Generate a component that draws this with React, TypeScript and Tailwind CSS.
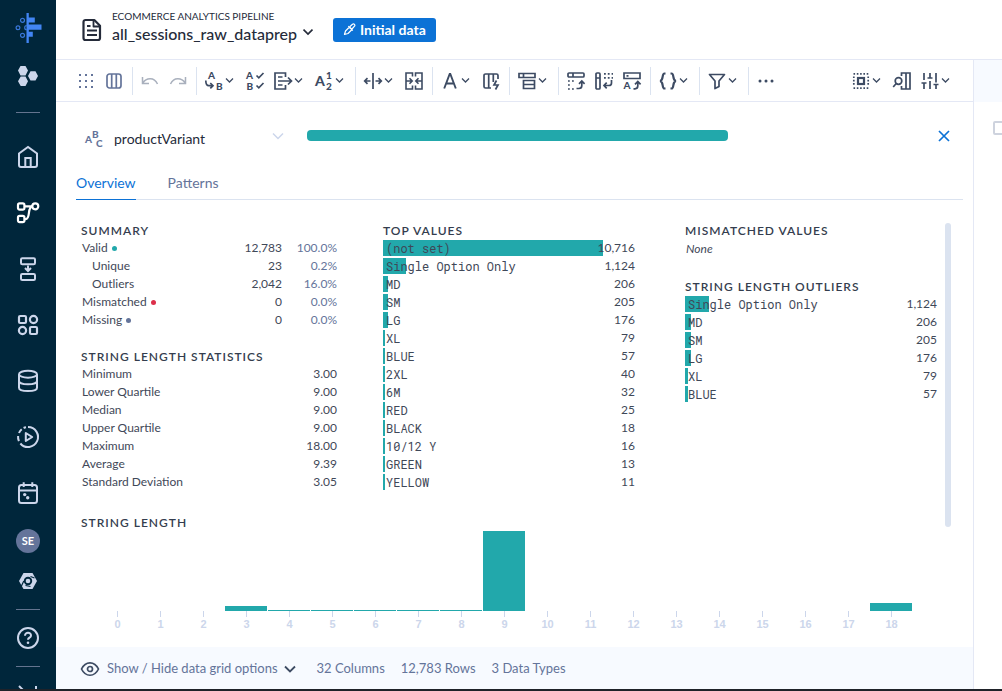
import type { ReactNode } from "react";

type Count = { label: string; count: string; bar: number };

const topValues: Count[] = [
  { label: "(not set)", count: "10,716", bar: 220 },
  { label: "Single Option Only", count: "1,124", bar: 23 },
  { label: "MD", count: "206", bar: 5 },
  { label: "SM", count: "205", bar: 5 },
  { label: "LG", count: "176", bar: 5 },
  { label: "XL", count: "79", bar: 2 },
  { label: "BLUE", count: "57", bar: 2 },
  { label: "2XL", count: "40", bar: 2 },
  { label: "6M", count: "32", bar: 2 },
  { label: "RED", count: "25", bar: 2 },
  { label: "BLACK", count: "18", bar: 2 },
  { label: "10/12 Y", count: "16", bar: 2 },
  { label: "GREEN", count: "13", bar: 2 },
  { label: "YELLOW", count: "11", bar: 2 },
];

const outliers: Count[] = [
  { label: "Single Option Only", count: "1,124", bar: 24 },
  { label: "MD", count: "206", bar: 6 },
  { label: "SM", count: "205", bar: 6 },
  { label: "LG", count: "176", bar: 6 },
  { label: "XL", count: "79", bar: 3 },
  { label: "BLUE", count: "57", bar: 3 },
];

const summary = [
  { label: "Valid", dot: "bg-[#22a8ab]", count: "12,783", pct: "100.0%", sub: false },
  { label: "Unique", dot: "", count: "23", pct: "0.2%", sub: true },
  { label: "Outliers", dot: "", count: "2,042", pct: "16.0%", sub: true },
  { label: "Mismatched", dot: "bg-[#dc2f4a]", count: "0", pct: "0.0%", sub: false },
  { label: "Missing", dot: "bg-[#64749a]", count: "0", pct: "0.0%", sub: false },
];

const statistics = [
  ["Minimum", "3.00"],
  ["Lower Quartile", "9.00"],
  ["Median", "9.00"],
  ["Upper Quartile", "9.00"],
  ["Maximum", "18.00"],
  ["Average", "9.39"],
  ["Standard Deviation", "3.05"],
];

const histogram = [0, 0, 0, 5, 1, 1, 1, 1, 1, 80, 0, 0, 0, 0, 0, 0, 0, 0, 8];

function Icon({ children, size = 20, sw = 1.7 }: { children: ReactNode; size?: number; sw?: number }) {
  return (
    <svg width={size} height={size} viewBox={`0 0 ${size} ${size}`} fill="none" stroke="currentColor" strokeWidth={sw} className="shrink-0 overflow-visible" aria-hidden="true">
      {children}
    </svg>
  );
}

function Letter({ x, y, size = 10, children }: { x: number; y: number; size?: number; children: string }) {
  return (
    <text x={x} y={y} fontSize={size} className="font-['Lato',sans-serif] font-black" fill="currentColor" stroke="none">
      {children}
    </text>
  );
}

function Chevron() {
  return (
    <svg width="9" height="9" viewBox="0 0 9 9" fill="none" stroke="currentColor" strokeWidth="1.3" className="shrink-0" aria-hidden="true">
      <path d="M1 2.500l3.500 3.500L8 2.500" />
    </svg>
  );
}

function Tool({ label, children, menu, tone = "text-[#3d4b63]" }: { label: string; children: ReactNode; menu?: boolean; tone?: string }) {
  return (
    <button type="button" aria-label={label} className={`flex h-7 shrink-0 items-center ${menu ? "w-[41px] gap-px" : "w-7"} pl-1 ${tone}`}>
      <Icon>{children}</Icon>
      {menu && <Chevron />}
    </button>
  );
}

function Divider() {
  return <span className="ml-1 mr-[3px] h-7 w-px shrink-0 bg-[#dbe3f0]" />;
}

function NavItem({ label, children, h = "h-14", tone = "text-[#ccd6eb]" }: { label: string; children: ReactNode; h?: string; tone?: string }) {
  return (
    <a href="#" aria-label={label} className={`flex w-full shrink-0 items-center justify-center ${h} ${tone}`}>
      {children}
    </a>
  );
}

function Sidebar() {
  return (
    <nav className="flex w-14 shrink-0 flex-col items-center overflow-hidden bg-[#00263b]">
      <NavItem label="Dashboard" tone="text-[#4285f4]">
        <svg width="28" height="32" viewBox="0 0 28 32" aria-hidden="true">
          <path d="M12.500 1h2.300v4.500h6v5h-6v2H27.500v5.200H14.800v2h4v5h-4V31h-2.300z" fill="currentColor" />
          <g fill="none" stroke="currentColor" strokeWidth="1.200" opacity=".85">
            <circle cx="8.500" cy="8.300" r="2" />
            <circle cx="4" cy="15.700" r="1.900" />
            <path d="M12.700 13.700a2 2 0 100 4" />
            <circle cx="8.500" cy="23.300" r="2" />
          </g>
        </svg>
      </NavItem>
      <NavItem label="Apps" h="h-10">
        <svg width="20" height="20" viewBox="0 0 20 20" fill="currentColor" aria-hidden="true">
          <path d="M2.500 0h5L10 4.600 7.500 9.400h-5L0 4.600zM2.700 10.600h4.800l2.500 4.600-2.500 4.800H2.700L0 15.200zM12.500 5.200h5L20 9.900l-2.500 4.700h-5L10 9.900z" />
        </svg>
      </NavItem>
      <span className="my-4 h-px w-6 shrink-0 bg-[#64748f]" />
      <NavItem label="Home">
        <Icon size={24} sw={2}>
          <path d="M3 8.500L12 2l9 6.500V20a2 2 0 01-2 2H5a2 2 0 01-2-2z" />
          <path d="M9.300 22v-9h5.400v9" />
        </Icon>
      </NavItem>
      <NavItem label="Flows" tone="text-white">
        <Icon size={24} sw={2.2}>
          <rect x="2" y="2.300" width="6.400" height="6.400" rx="1.600" />
          <rect x="2" y="14.800" width="6.400" height="6.400" rx="1.600" />
          <circle cx="19.300" cy="5.300" r="3" />
          <path d="M8.400 5.300h8M8.400 18.200h1.200c5.400 0 1.200-12.900 7-12.900" />
        </Icon>
      </NavItem>
      <NavItem label="Plans">
        <Icon size={24} sw={2}>
          <rect x="5" y="1.300" width="14" height="6" rx="1.300" />
          <rect x="5" y="17" width="14" height="6" rx="1.300" />
          <path d="M12 8.500v5M9 11l3 3 3-3" />
        </Icon>
      </NavItem>
      <NavItem label="Library">
        <Icon size={24} sw={2.2}>
          <rect x="3" y="3" width="7" height="7" rx="1.200" />
          <circle cx="17.500" cy="6.500" r="3.600" />
          <circle cx="6.500" cy="17.500" r="3.600" />
          <rect x="14" y="14" width="7" height="7" rx="1.200" />
        </Icon>
      </NavItem>
      <NavItem label="Connections">
        <Icon size={24} sw={2}>
          <ellipse cx="12" cy="5.200" rx="9" ry="3.500" />
          <path d="M3 5.200v13.500C3 20.800 7 22 12 22s9-1.200 9-3.300V5.200M3 12c0 2 4 3.300 9 3.300s9-1.300 9-3.300" />
        </Icon>
      </NavItem>
      <NavItem label="Jobs">
        <Icon size={24} sw={2}>
          <path d="M12 2a10 10 0 11-7.600 16.500" />
          <path d="M2.900 16.200a10 10 0 01-.8-5.200M3 8a10 10 0 012.700-3.800M7.600 3a10 10 0 012.400-.8" />
          <path d="M9.800 8v8l6.400-4z" strokeLinejoin="round" />
        </Icon>
      </NavItem>
      <NavItem label="Schedules">
        <Icon size={24} sw={2}>
          <rect x="3" y="4" width="18" height="18" rx="2.500" />
          <path d="M3 9.500h18M7.700 1.300V6M16.300 1.300V6" />
          <circle cx="8.700" cy="13.600" r="1.700" fill="currentColor" stroke="none" />
          <circle cx="11.700" cy="16.800" r="1.700" fill="currentColor" stroke="none" />
        </Icon>
      </NavItem>
      <NavItem label="Account" h="h-10">
        <span className="flex size-6 items-center justify-center rounded-full bg-[#64749a] text-[11px] font-bold text-white">SE</span>
      </NavItem>
      <NavItem label="Google Cloud" h="h-10">
        <svg width="18" height="16" viewBox="0 0 18 16" aria-hidden="true">
          <path d="M4.500 0h9L18 8l-4.500 8h-9L0 8z" fill="currentColor" />
          <circle cx="9" cy="8" r="4.200" fill="#00263b" />
          <path d="M11.500 3.500L15.500 5M4.800 8L2.200 13.500M6.500 12.500l5 1" stroke="#00263b" strokeWidth="1.200" />
          <circle cx="9" cy="8" r="2.300" fill="currentColor" />
        </svg>
      </NavItem>
      <span className="mt-2 h-px w-6 shrink-0 bg-[#64748f]" />
      <NavItem label="Help">
        <Icon size={24} sw={2}>
          <circle cx="12" cy="12" r="10" />
          <path d="M9 9.700c0-4 6.200-3.700 6 0-.1 2-3 2-3 4" />
          <circle cx="12" cy="16.800" r="1.300" fill="currentColor" stroke="none" />
        </Icon>
      </NavItem>
      <span className="h-px w-6 shrink-0 bg-[#64748f]" />
      <NavItem label="Expand menu">
        <Icon size={24} sw={2}>
          <path d="M3 3l8 8-8 8M20 3v18" />
        </Icon>
      </NavItem>
    </nav>
  );
}

function Header() {
  return (
    <header className="flex h-[60px] shrink-0 items-center border-b border-[#e4e8f5] bg-white pl-6">
      <svg width="24" height="24" viewBox="0 0 24 24" fill="none" stroke="#252b3a" strokeWidth="2.200" strokeLinejoin="round" aria-hidden="true">
        <path d="M5.500 2h8.800L20 7.700V20a2 2 0 01-2 2H5.500a2 2 0 01-2-2V4a2 2 0 012-2z" />
        <path d="M13.500 2v6.500H20M7 8h3.500M7 12.500h10M7 17h10" strokeWidth="1.800" />
      </svg>
      <div className="ml-2 flex flex-col pb-2">
        <span className="text-[10px] leading-4 text-[#252b3a]">ECOMMERCE ANALYTICS PIPELINE</span>
        <button type="button" className="flex items-center gap-1.5 text-base font-medium leading-5 text-[#252b3a]">
          all_sessions_raw_dataprep
          <svg width="10" height="10" viewBox="0 0 10 10" fill="none" stroke="currentColor" strokeWidth="1.700" className="-mt-1" aria-hidden="true">
            <path d="M.5 2.500L5 7l4.500-4.500" />
          </svg>
        </button>
      </div>
      <button type="button" className="ml-5 flex h-6 items-center gap-1 rounded-[3px] bg-[#0c72d6] px-2.5 text-sm font-bold text-white">
        <svg width="13" height="13" viewBox="0 0 13 13" fill="none" stroke="currentColor" strokeWidth="1.200" strokeLinejoin="round" aria-hidden="true">
          <path d="M1.500 11.500L2.500 8l4-4 2.500 2.500-4 4zM5.300 3.200l4.500 4.500M7 3.500L9.500 1.200c1.500-1 3 .6 2 2L9 6" />
        </svg>
        Initial data
      </button>
    </header>
  );
}

function Toolbar() {
  return (
    <div role="toolbar" className="flex h-[42px] shrink-0 items-center border-b border-[#e4e8f5] px-4">
      <Tool label="Grid view" tone="text-[#64749a]">
        <path d="M3 4h2M9 4h2M15 4h2M3 10h2M9 10h2M15 10h2M3 16h2M9 16h2M15 16h2" strokeWidth="2.200" />
      </Tool>
      <Tool label="Column view" tone="text-[#64749a]">
        <rect x="3" y="3" width="14" height="14" rx="2.500" />
        <path d="M7.700 3v14M12.300 3v14" />
      </Tool>
      <Divider />
      <Tool label="Undo" tone="text-[#a9b0bd]">
        <path d="M2.500 6v6.500H9M2.800 12C6 7 14 5.500 17.500 13" strokeWidth="1.500" />
      </Tool>
      <Tool label="Redo" tone="text-[#a9b0bd]">
        <path d="M17.500 6v6.500H11M17.200 12C14 7 6 5.500 2.500 13" strokeWidth="1.500" />
      </Tool>
      <Divider />
      <Tool label="Replace" menu>
        <Letter x={4} y={8}>A</Letter>
        <Letter x={12} y={19}>B</Letter>
        <path d="M1.800 9.500c0 4 1 5.200 3 5.200h4M6.300 12l2.700 2.700-2.700 2.700" />
      </Tool>
      <Tool label="Standardize">
        <Letter x={1} y={8}>A</Letter>
        <Letter x={1.5} y={19}>B</Letter>
        <path d="M11.500 4.500l2.300 2.300L18.500 2M11.500 14.500l2.300 2.300 4.700-4.800" />
      </Tool>
      <Tool label="Extract" menu>
        <path d="M12.500 6V2H2v16h10.500v-4M5 6h4.500M5 10h13M5 14h4.500M15 6.500l3.500 3.500-3.500 3.500" />
      </Tool>
      <Tool label="Number format" menu>
        <Letter x={1} y={15} size={14}>A</Letter>
        <Letter x={12} y={8}>1</Letter>
        <Letter x={12} y={19}>2</Letter>
      </Tool>
      <Divider />
      <Tool label="Split" menu>
        <path d="M10 2v16M7.500 10H2M4.500 7.200L1.700 10l2.800 2.800M12.500 10H18M15.500 7.200l2.800 2.800-2.800 2.800" />
      </Tool>
      <Tool label="Merge">
        <path d="M8.500 5.500V2H2v16h6.500v-3.500M11.500 5.500V2H18v16h-6.500v-3.500M2 10h6M5.500 7.300L8.200 10l-2.700 2.700M18 10h-6M14.500 7.300L11.800 10l2.700 2.700" strokeWidth="1.600" />
      </Tool>
      <Divider />
      <Tool label="Format" menu>
        <path d="M4.200 17.500L9.700 3h.6l5.500 14.500M6.300 12.500h7.400" strokeWidth="1.900" />
      </Tool>
      <Tool label="Calculate column">
        <path d="M10 17H4.500A1.500 1.500 0 013 15.500v-11A1.500 1.500 0 014.500 3h11A1.500 1.500 0 0117 4.500V8M7.700 3v14M12.300 3v8M15.500 9.500L13 14h4l-2.500 4.500" />
      </Tool>
      <Divider />
      <Tool label="Rows" menu>
        <path d="M2 2.500h16v4H2zM6.500 2.500v4M6.500 9.500h11v8h-11zM6.500 13.500h11" />
      </Tool>
      <Divider />
      <Tool label="Pivot">
        <rect x="2" y="2" width="16" height="4" rx="1" />
        <path d="M7 2v4M10.500 17.500H13c2 0 2.800-1 2.800-3V10.500M13 12.800l2.800-2.800 2.800 2.800" />
        <path d="M2 10h6M2 14h2M2 18h6" strokeDasharray="1.800 2.200" />
      </Tool>
      <Tool label="Unpivot">
        <rect x="2" y="2" width="4" height="16" rx="1" />
        <path d="M2 7h4M17.500 9v3c0 1.500-1 2.500-2.500 2.500h-5M12.700 11.700L10 14.500l2.700 2.800" />
        <path d="M10 2.800h9M10 6.800h9" strokeDasharray="1.800 2" />
      </Tool>
      <Tool label="Rename headers">
        <path d="M2 2h16v5.500H2zM4.500 4.800h2M11.500 17.800H13c2 0 2.800-1 2.800-3v-3.500M13 13.300l2.800-2.800 2.800 2.800" />
        <Letter x={1.5} y={18}>A</Letter>
      </Tool>
      <Divider />
      <Tool label="Functions" menu>
        <path d="M7.500 2.500H6.500C3.500 2.500 6 9.500 2 10c4 .5 1.500 7.500 4.500 7.500h1M12.500 2.500h1c3 0 .5 7 4.500 7.500-4 .5-1.500 7.500-4.500 7.500h-1" strokeWidth="2.200" />
      </Tool>
      <Divider />
      <Tool label="Filter" menu>
        <path d="M2.500 3.500h15L12 10v5.500L8 17.500V10z" strokeLinejoin="round" />
      </Tool>
      <Divider />
      <Tool label="More">
        <path d="M4 10h.01M10 10h.01M16 10h.01" strokeWidth="3" strokeLinecap="round" />
      </Tool>
      <span className="flex-1" />
      <Tool label="Select" menu>
        <path d="M2.500 2.800h15.500M2.500 17.200h15.500M2.800 5.500v10M17.200 5.500v10" strokeDasharray="1.600 1.700" />
        <rect x="7" y="7" width="6" height="6" strokeWidth="2.200" />
      </Tool>
      <Tool label="Search columns">
        <circle cx="6.500" cy="10" r="3.300" />
        <path d="M4.200 12.500L1.200 16M9.500 5V2H18v16H9.500v-3M14 2v16" />
      </Tool>
      <Tool label="Settings" menu>
        <path d="M4 2v7M4 12v6M1.500 12h5M10 2v5M10 10v8M7.500 7h5M16 2v9.500M16 14v4M13.500 13.500h5" />
      </Tool>
    </div>
  );
}

function Heading({ children }: { children: ReactNode }) {
  return <h2 className="h-[18px] text-xs font-semibold leading-5 tracking-[1px] text-[#343d4e]">{children}</h2>;
}

function BarTable({ title, rows }: { title: string; rows: Count[] }) {
  return (
    <section>
      <Heading>{title}</Heading>
      <table className="w-full border-collapse text-xs leading-[18px] text-[#3f4858]">
        <tbody>
          {rows.map((r) => (
            <tr key={r.label}>
              <th scope="row" className="relative p-0 text-left align-top font-normal">
                <span className="absolute left-0 top-px h-4 bg-[#22a8ab]" style={{ width: r.bar }} />
                <span className="relative block whitespace-nowrap pl-[3px] font-['Roboto_Mono','Liberation_Mono',monospace]">{r.label}</span>
              </th>
              <td className="relative w-10 p-0 text-right align-top">{r.count}</td>
            </tr>
          ))}
        </tbody>
      </table>
    </section>
  );
}

function Details() {
  return (
    <div className="flex pl-[5px] pr-3 pt-[21px]">
      <div className="min-w-0 flex-1">
        <div className="grid grid-cols-3 gap-x-[46px]">
          <div className="flex flex-col gap-[18px]">
            <section>
              <Heading>SUMMARY</Heading>
              <table className="w-full text-xs leading-[18px] text-[#3f4858]">
                <tbody>
                  {summary.map((r) => (
                    <tr key={r.label}>
                      <th scope="row" className={`p-0 text-left font-normal ${r.sub ? "pl-[11px]" : "pl-px"}`}>
                        {r.label}
                        {r.dot && <span className={`ml-1 inline-block size-[5px] rounded-full align-middle ${r.dot}`} />}
                      </th>
                      <td className="p-0 text-right">{r.count}</td>
                      <td className="w-[55px] p-0 text-right text-[#64749a]">{r.pct}</td>
                    </tr>
                  ))}
                </tbody>
              </table>
            </section>
            <section>
              <Heading>STRING LENGTH STATISTICS</Heading>
              <table className="w-full text-xs leading-[18px] text-[#3f4858]">
                <tbody>
                  {statistics.map(([label, value]) => (
                    <tr key={label}>
                      <th scope="row" className="p-0 pl-px text-left font-normal">{label}</th>
                      <td className="p-0 text-right">{value}</td>
                    </tr>
                  ))}
                </tbody>
              </table>
            </section>
          </div>
          <div className="pr-1">
            <BarTable title="TOP VALUES" rows={topValues} />
          </div>
          <div className="flex flex-col gap-[18px] pr-1">
            <section>
              <Heading>MISMATCHED VALUES</Heading>
              <p className="pl-px text-xs italic leading-5 text-[#3f4858]">None</p>
            </section>
            <BarTable title="STRING LENGTH OUTLIERS" rows={outliers} />
          </div>
        </div>
        <section className="pt-[22px]">
          <Heading>STRING LENGTH</Heading>
          <div className="ml-[15px] mr-7 flex">
            {histogram.map((h, i) => (
              <div key={i} className="flex min-w-0 flex-1 flex-col items-center">
                <div className="flex h-20 w-full items-end pr-px">
                  <div className="w-full bg-[#22a8ab]" style={{ height: h }} />
                </div>
                <span className="h-1.5 w-px bg-[#ccd6eb]" />
                <span className="font-['Liberation_Sans',sans-serif] text-[11px] font-bold leading-[14px] text-[#ccd6eb]">{i}</span>
              </div>
            ))}
          </div>
        </section>
      </div>
      <span className="ml-1 mt-0.5 h-[304px] w-1.5 shrink-0 rounded-full bg-[#dbe3f0]" />
    </div>
  );
}

function ColumnPanel() {
  return (
    <section className="flex min-h-0 flex-1 flex-col overflow-hidden pl-5 pr-2.5 pt-[21px]">
      <div className="flex items-start">
        <button type="button" className="flex w-52 items-center pl-[9px] pt-1 text-sm leading-6 text-[#252b3a]">
          <svg width="19" height="18" viewBox="0 0 19 18" className="overflow-visible text-[#64749a]" aria-hidden="true">
            <Letter x={0} y={13}>A</Letter>
            <Letter x={7} y={8}>B</Letter>
            <Letter x={11} y={17}>C</Letter>
          </svg>
          <span className="ml-2.5">productVariant</span>
          <svg width="12" height="12" viewBox="0 0 12 12" fill="none" stroke="#ccd6eb" strokeWidth="1.500" className="-mt-1.5 ml-auto" aria-hidden="true">
            <path d="M1 3.500L6 8.500l5-5" />
          </svg>
        </button>
        <div className="ml-[23px] mt-[7px] h-[11px] max-w-[421px] flex-1 rounded-sm bg-[#22a8ab]" />
        <button type="button" aria-label="Close" className="ml-auto mr-3 mt-1.5 text-[#0c72d6]">
          <svg width="14" height="14" viewBox="0 0 14 14" fill="none" stroke="currentColor" strokeWidth="1.700" aria-hidden="true">
            <path d="M2 2l10 10M12 2L2 12" />
          </svg>
        </button>
      </div>
      <div role="tablist" className="mt-4 flex gap-8 border-b border-[#dbe3f0] text-sm">
        <button type="button" role="tab" aria-selected="true" className="-mb-px h-[33px] border-b border-[#0c72d6] text-[#0c72d6]">
          Overview
        </button>
        <button type="button" role="tab" aria-selected="false" className="-mb-px h-[33px] border-b border-transparent text-[#64749a]">
          Patterns
        </button>
      </div>
      <Details />
    </section>
  );
}

function StatusBar() {
  return (
    <footer className="flex h-[42px] shrink-0 items-center gap-4 bg-[#f7faff] pl-6 pt-px text-[13px] text-[#64749a]">
      <button type="button" className="flex items-center">
        <svg width="20" height="16" viewBox="0 0 20 16" fill="none" stroke="#3d4b63" strokeWidth="1.700" aria-hidden="true">
          <path d="M1.500 8C5.500-.3 14.500-.3 18.500 8c-4 8.300-13 8.300-17 0z" />
          <circle cx="10" cy="8" r="2.500" />
        </svg>
        <span className="ml-[7px]">Show / Hide data grid options</span>
        <svg width="12" height="12" viewBox="0 0 12 12" fill="none" stroke="#3d4b63" strokeWidth="1.800" className="ml-1.5" aria-hidden="true">
          <path d="M1 3.500L6 8.500l5-5" />
        </svg>
      </button>
      <span className="ml-[5px]">32 Columns</span>
      <span>12,783 Rows</span>
      <span>3 Data Types</span>
    </footer>
  );
}

export default function App() {
  return (
    <div className="flex h-screen overflow-hidden border-b-2 border-[#1f2229] bg-white font-['Lato',sans-serif]">
      <Sidebar />
      <div className="flex min-w-0 flex-1 flex-col">
        <Header />
        <div className="flex min-h-0 flex-1">
          <main className="flex min-w-0 flex-1 flex-col border-r border-[#e4e8f5]">
            <Toolbar />
            <ColumnPanel />
            <StatusBar />
          </main>
          <aside className="flex w-7 shrink-0 flex-col overflow-hidden">
            <div className="h-[42px] shrink-0 bg-[#f7faff]" />
            <input type="checkbox" aria-label="Select step" className="ml-[19px] mt-[19px] size-3.5 shrink-0 appearance-none rounded-[2px] border-2 border-[#ced3de]" />
          </aside>
        </div>
      </div>
    </div>
  );
}
